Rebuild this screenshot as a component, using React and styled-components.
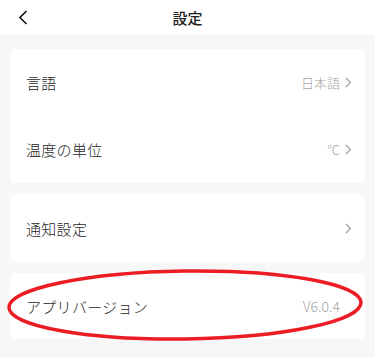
import React from 'react';
import styled, { createGlobalStyle } from 'styled-components';

const GlobalStyle = createGlobalStyle`
  html, body {
    margin: 0;
    padding: 0;
    background: #f7f7f7;
    font-family: "Noto Sans CJK JP", "Noto Sans", sans-serif;
  }
`;

const Page = styled.div`
  position: relative;
  width: 375px;
  height: 357px;
  background: #f7f7f7;
  overflow: hidden;
`;

const Header = styled.header`
  height: 35px;
  background: #ffffff;
  display: grid;
  grid-template-columns: 50px 1fr 50px;
  align-items: center;
`;

const BackButton = styled.button`
  border: none;
  background: none;
  padding: 0 0 0 18px;
  height: 35px;
  display: flex;
  align-items: center;
`;

const Title = styled.h1`
  margin: 0;
  text-align: center;
  font-size: 15px;
  font-weight: 500;
  color: #222;
`;

const List = styled.div`
  display: flex;
  flex-direction: column;
  gap: 11px;
  padding: 14px 10px 0;
`;

const Card = styled.section`
  background: #ffffff;
  border-radius: 6px;
`;

const Row = styled.div`
  height: ${p => p.$h || 67}px;
  display: flex;
  align-items: center;
  justify-content: space-between;
  padding: 0 ${p => (p.$noArrow ? 25 : 13)}px 0 16px;
`;

const Label = styled.span`
  font-size: 15px;
  font-weight: 300;
  color: #262626;
  letter-spacing: 0.3px;
`;

const Value = styled.span`
  display: flex;
  align-items: center;
  gap: 5px;
  font-size: ${p => p.$size || 13}px;
  font-weight: 300;
  color: #a3a3a3;
`;

const Chevron = () => (
  <svg width="7" height="11" viewBox="0 0 7 11">
    <path d="M1 1l4.5 4.5L1 10" fill="none" stroke="#9a9a9a" strokeWidth="1.1" />
  </svg>
);

const Mark = styled.svg`
  position: absolute;
  left: 0;
  top: 0;
  pointer-events: none;
`;

const App = () => (
  <Page>
    <GlobalStyle />
    <Header>
      <BackButton>
        <svg width="10" height="15" viewBox="0 0 10 15">
          <path d="M8.5 1L2 7.5 8.5 14" fill="none" stroke="#111" strokeWidth="1.6" />
        </svg>
      </BackButton>
      <Title>設定</Title>
      <span />
    </Header>
    <List>
      <Card>
        <Row>
          <Label>言語</Label>
          <Value>日本語 <Chevron /></Value>
        </Row>
        <Row>
          <Label>温度の単位</Label>
          <Value>°C <Chevron /></Value>
        </Row>
      </Card>
      <Card>
        <Row $h={68}>
          <Label>通知設定</Label>
          <Value><Chevron /></Value>
        </Row>
      </Card>
      <Card>
        <Row $h={66} $noArrow>
          <Label>アプリバージョン</Label>
          <Value $size={14}>V6.0.4</Value>
        </Row>
      </Card>
    </List>
    <Mark width="375" height="357" viewBox="0 0 375 357">
      <ellipse cx="185" cy="305" rx="176" ry="34" fill="none" stroke="#ec1c24" strokeWidth="3.5" transform="rotate(-0.8 185 305)" />
    </Mark>
  </Page>
);

export default App;
